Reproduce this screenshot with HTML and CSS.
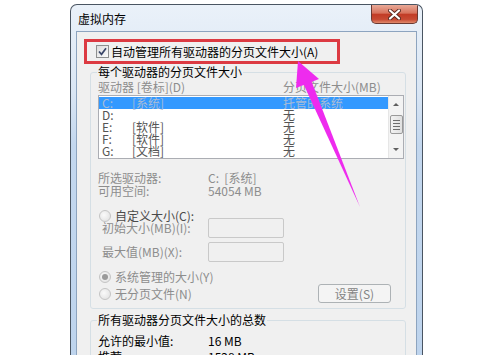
FILE: index.html
```html
<!DOCTYPE html>
<html lang="zh-CN">
<head>
  <meta charset="UTF-8">
  <title>虚拟内存</title>
  <link rel="stylesheet" href="styles.css">
</head>
<body>
  <div class="stage">
    <div class="win">
      <div class="titlebar">
        <span class="title">虚拟内存</span>
        <button class="close">
          <svg width="13" height="11" viewBox="0 0 13 11">
            <path d="M2 1.5 L11 9.5 M11 1.5 L2 9.5" stroke="#5a2a22" stroke-width="4" stroke-linecap="round"/>
            <path d="M2 1.5 L11 9.5 M11 1.5 L2 9.5" stroke="#fff" stroke-width="2.2" stroke-linecap="round"/>
          </svg>
        </button>
      </div>

      <div class="client">
        <label class="auto">
          <span class="chk">
            <svg width="11" height="11" viewBox="0 0 11 11">
              <path d="M2 5.5 L4.5 8.3 L9 2.2" fill="none" stroke="#3a4668" stroke-width="1.7"/>
            </svg>
          </span>
          自动管理所有驱动器的分页文件大小(A)
        </label>

        <fieldset class="group g1">
          <legend>每个驱动器的分页文件大小</legend>
          <div class="cols dim">
            <span>驱动器 [卷标](D)</span>
            <span>分页文件大小(MB)</span>
          </div>

          <div class="list">
            <div class="rows">
              <div class="row sel"><span>C:</span><span>[系统]</span><span>托管的系统</span></div>
              <div class="row"><span>D:</span><span></span><span>无</span></div>
              <div class="row"><span>E:</span><span>[软件]</span><span>无</span></div>
              <div class="row"><span>F:</span><span>[软件]</span><span>无</span></div>
              <div class="row"><span>G:</span><span>[文档]</span><span>无</span></div>
            </div>
            <div class="sbar">
              <span class="arr up"></span>
              <span class="thumb"><i></i><i></i><i></i><i></i></span>
              <span class="arr down"></span>
            </div>
          </div>

          <div class="info dim"><span>所选驱动器:</span><span>C:  [系统]</span></div>
          <div class="info dim"><span>可用空间:</span><span>54054 MB</span></div>

          <div class="radio custom"><span class="rb"></span>自定义大小(C):</div>
          <div class="field first dim"><span>初始大小(MB)(I):</span><span class="input"></span></div>
          <div class="field dim"><span>最大值(MB)(X):</span><span class="input"></span></div>
          <div class="radio sys dim"><span class="rb on"></span>系统管理的大小(Y)</div>
          <div class="lastrow">
            <div class="radio dim"><span class="rb"></span>无分页文件(N)</div>
            <button class="btn">设置(S)</button>
          </div>
        </fieldset>

        <fieldset class="group g2">
          <legend>所有驱动器分页文件大小的总数</legend>
          <div class="info total"><span>允许的最小值:</span><span>16 MB</span></div>
          <div class="info total next"><span>推荐:</span><span>1528 MB</span></div>
        </fieldset>
      </div>
    </div>

    <svg class="arrow" width="504" height="361" viewBox="0 0 504 361">
      <polygon points="298,61 319,79 296,88" fill="#ee2bee"/>
      <polygon points="303,83 311,80 360,207" fill="#ee2bee"/>
    </svg>
  </div>
</body>
</html>
```

FILE: styles.css
```css
* {
  box-sizing: border-box;
}
html, body {
  margin: 0;
}
body {
  width: 504px;
  height: 361px;
  overflow: hidden;
  background: #fff;
  color: #000;
  font: 12px/12px "Noto Sans CJK SC", "Liberation Sans", sans-serif;
}
.stage {
  position: relative;
  width: 504px;
  height: 361px;
  padding: 4px 0 0 70px;
}

/* window frame */
.win {
  width: 353px;
  height: 351px;
  overflow: hidden;
  display: flex;
  flex-direction: column;
  padding: 0 5px;
  border: 1px solid #4a5562;
  border-bottom: none;
  border-radius: 7px 7px 0 0;
  background: linear-gradient(#eaf1f9, #dae6f4 25%, #c3d7ee 40%, #bed4ed);
}
.titlebar {
  height: 26px;
  flex: none;
  display: flex;
  align-items: flex-start;
  justify-content: space-between;
}
.title {
  margin: 8px 0 0 2px;
  font-size: 12px;
  line-height: 12px;
}
.close {
  width: 47px;
  height: 19px;
  margin: 0 -1px 0 0;
  padding: 0;
  display: flex;
  align-items: center;
  justify-content: center;
  border: 1px solid #6b3a32;
  border-top: none;
  border-radius: 0 0 5px 5px;
  background: linear-gradient(#e9aa98, #d7725c 45%, #c23c26 52%, #c74a33 80%, #e08a6c);
}
.client {
  flex: 1;
  background: #f0f0f0;
  border: 1px solid #8da4bf;
  border-bottom: none;
}

/* auto manage checkbox, with red highlight box */
.auto {
  width: 256px;
  height: 25px;
  margin: 7px 0 0 7px;
  padding-left: 9px;
  display: flex;
  align-items: center;
  border: 3px solid #dc3a42;
}
.chk {
  width: 13px;
  height: 13px;
  margin-right: 2px;
  display: flex;
  align-items: center;
  justify-content: center;
  border: 1px solid #8e8f8f;
  background: linear-gradient(135deg, #dcdcdc, #fbfbfb);
}

/* group boxes */
.group {
  width: 316px;
  margin: 2px 0 0 13px;
  padding: 0 7px 5px 7px;
  min-inline-size: 0;
  border: 1px solid #d5dfe5;
  border-radius: 3px;
}
.group legend {
  margin-left: -1px;
  padding: 0 1px;
  line-height: 12px;
}
.g2 {
  margin-top: 5px;
}
.dim {
  color: #8d8d8d;
}

.cols {
  margin-top: 3px;
  display: grid;
  grid-template-columns: 185px auto;
}

/* drive list */
.list {
  width: 306px;
  height: 64px;
  margin-top: 2px;
  display: flex;
  border: 1px solid #abadb3;
  background: #fff;
}
.rows {
  flex: 1;
  padding-top: 1px;
}
.row {
  height: 12px;
  padding-left: 3px;
  display: grid;
  grid-template-columns: 30px 151px auto;
  color: #555;
  white-space: pre;
}
.row.sel {
  background: #3399ff;
  color: #a9bcd6;
}
.sbar {
  width: 15px;
  display: flex;
  flex-direction: column;
  align-items: center;
  background: #f3f3f3;
  border-left: 1px solid #e6e6e6;
}
.arr {
  width: 0;
  height: 0;
  border-left: 3px solid transparent;
  border-right: 3px solid transparent;
}
.arr.up {
  margin-top: 7px;
  border-bottom: 3px solid #5f5f5f;
}
.arr.down {
  margin-top: auto;
  margin-bottom: 7px;
  border-top: 3px solid #5f5f5f;
}
.thumb {
  width: 13px;
  height: 19px;
  margin-top: 9px;
  display: flex;
  flex-direction: column;
  align-items: center;
  justify-content: center;
  gap: 2px;
  border: 1px solid #9a9a9a;
  border-radius: 2px;
  background: linear-gradient(90deg, #f2f2f2, #e0e0e0);
}
.thumb i {
  width: 7px;
  height: 1px;
  background: #6e6e6e;
}

/* selected drive info */
.info {
  margin-top: 12px;
  line-height: 13px;
  display: grid;
  grid-template-columns: 110px auto;
  white-space: pre;
}
.info + .info {
  margin-top: 0;
}
.info.total {
  margin-top: 8px;
}
.info.total.next {
  margin-top: 3px;
}

/* radios and size fields */
.radio {
  height: 13px;
  line-height: 13px;
  display: flex;
  align-items: center;
  padding-left: 1px;
}
.radio.custom {
  margin-top: 12px;
  color: #4a4a4a;
}
.radio.sys {
  margin-top: 8px;
}
.rb {
  width: 12px;
  height: 12px;
  margin-right: 4px;
  border: 1px solid #c4c4c4;
  border-radius: 50%;
  background: radial-gradient(circle at 40% 40%, #fafafa, #dedede);
  display: flex;
  align-items: center;
  justify-content: center;
}
.rb.on::after {
  content: "";
  width: 6px;
  height: 6px;
  border-radius: 50%;
  background: #9a9a9a;
}
.field {
  height: 20px;
  margin-top: 4px;
  padding-left: 4px;
  display: grid;
  grid-template-columns: 106px 76px;
  align-items: center;
}
.field.first {
  margin-top: -4px;
}
.input {
  height: 20px;
  border: 1px solid #c9c9c9;
  border-radius: 2px;
  background: #f0f0f0;
}
.lastrow {
  margin-top: 1px;
  height: 19px;
  display: flex;
  align-items: center;
  justify-content: space-between;
  padding-right: 7px;
}
.btn {
  width: 73px;
  height: 19px;
  padding: 0;
  font: inherit;
  color: #838383;
  border: 1px solid #adb2b5;
  border-radius: 3px;
  background: #f4f4f4;
}

/* annotation arrow drawn over the dialog */
.arrow {
  position: absolute;
  top: 0;
  left: 0;
  pointer-events: none;
}
```
